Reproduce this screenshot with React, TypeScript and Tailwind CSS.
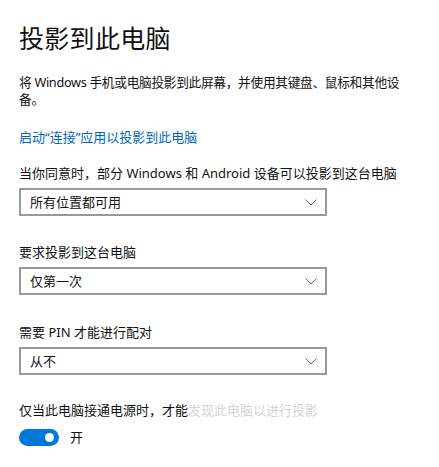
import { useState } from "react";

const font = {
  fontFamily: '"Noto Sans", "Noto Sans CJK SC", sans-serif',
};

type SelectProps = {
  value: string;
};

const Select = ({ value }: SelectProps) => {
  return (
    <div className="mt-[5px] flex h-[28px] w-[308px] items-center justify-between border-2 border-[#999] bg-white pr-[8px] pl-[9px]">
      <span className="text-[13px] leading-none text-[#111]">{value}</span>
      <svg width="12" height="7" viewBox="0 0 12 7" fill="none">
        <path d="M0.5 0.5 L6 6 L11.5 0.5" stroke="#666" strokeWidth="1" />
      </svg>
    </div>
  );
};

const App = () => {
  const [on, setOn] = useState(true);

  return (
    <main
      className="h-[467px] w-[439px] overflow-hidden bg-white pt-[22px] pl-[19px] text-[#111]"
      style={font}
    >
      {/* 标题 */}
      <h1 className="text-[25px] leading-[32px] font-normal tracking-[0.3px]">
        投影到此电脑
      </h1>

      {/* 说明 */}
      <p className="mt-[20px] w-[400px] text-[12.7px] leading-[17px] tracking-[-0.3px]">
        将 Windows 手机或电脑投影到此屏幕，并使用其键盘、鼠标和其他设备。
      </p>

      <a className="mt-[21px] block text-[13px] leading-[17px] text-[#0067b8]">
        启动“连接”应用以投影到此电脑
      </a>

      {/* 设置项 */}
      <section className="mt-[17px]">
        <div className="text-[13px] leading-[20px]">
          当你同意时，部分 Windows 和 Android 设备可以投影到这台电脑
        </div>
        <Select value="所有位置都可用" />
      </section>

      <section className="mt-[26px]">
        <div className="text-[13px] leading-[20px]">要求投影到这台电脑</div>
        <Select value="仅第一次" />
      </section>

      <section className="mt-[27px]">
        <div className="text-[13px] leading-[20px]">需要 PIN 才能进行配对</div>
        <Select value="从不" />
      </section>

      <section className="mt-[25px]">
        <div className="text-[13px] leading-[20px]">
          仅当此电脑接通电源时，才能
          <span className="text-[#d4d4d4]">发现此电脑以进行投影</span>
        </div>
        <div className="mt-[9px] flex items-center gap-[11px]">
          <button
            onClick={() => setOn(!on)}
            className={
              on
                ? "flex h-[17px] w-[40px] items-center justify-end rounded-full bg-[#0078d7] pr-[5px]"
                : "flex h-[17px] w-[40px] items-center justify-start rounded-full border-2 border-[#333] pl-[3px]"
            }
          >
            <span
              className={
                on
                  ? "h-[9px] w-[9px] rounded-full bg-white"
                  : "h-[9px] w-[9px] rounded-full bg-[#333]"
              }
            />
          </button>
          <span className="text-[13px] leading-[17px]">{on ? "开" : "关"}</span>
        </div>
      </section>
    </main>
  );
};

export default App;
